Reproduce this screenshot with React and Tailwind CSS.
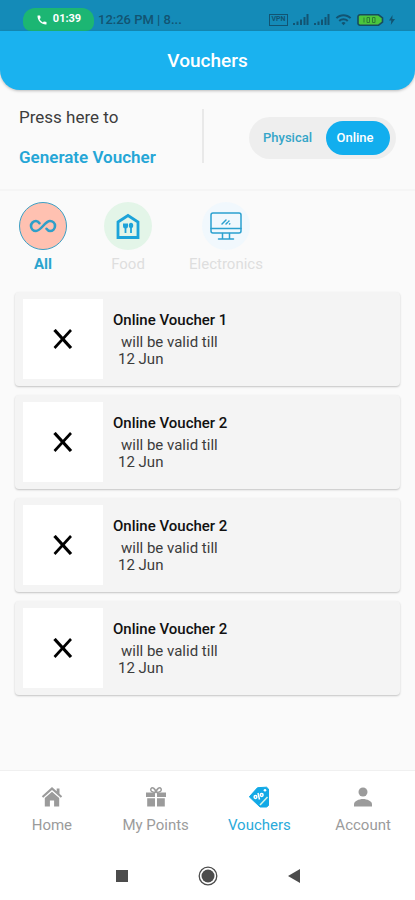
import { useState } from "react";
import clsx from "clsx";
import { MdCall, MdWifi } from "react-icons/md";

const vouchers = [
  { id: 1, title: "Online Voucher 1", date: "12 Jun" },
  { id: 2, title: "Online Voucher 2", date: "12 Jun" },
  { id: 3, title: "Online Voucher 2", date: "12 Jun" },
  { id: 4, title: "Online Voucher 2", date: "12 Jun" },
];

const categories = [
  { label: "All", icon: InfinityIcon, circle: "bg-[#ffc1b1]" },
  { label: "Food", icon: FoodIcon, circle: "bg-[#e3f5e8]" },
  { label: "Electronics", icon: MonitorIcon, circle: "bg-[#f1f8fd]" },
];

const tabs = [
  { label: "Home", icon: HomeIcon },
  { label: "My Points", icon: GiftIcon },
  { label: "Vouchers", icon: TagIcon },
  { label: "Account", icon: AccountIcon },
];

function InfinityIcon() {
  return (
    <svg width="28" height="14" viewBox="0 0 28 14" fill="none" stroke="#2f9fc9" strokeWidth="2.6" strokeLinecap="round">
      <path d="M10.500 4.200C9.500 2.800 8.500 2 7 2a5 5 0 0 0 0 10c5 0 9-10 14-10a5 5 0 0 1 0 10c-1.500 0-2.500-.8-3.500-2.200" />
    </svg>
  );
}

function FoodIcon() {
  return (
    <svg width="24" height="28" viewBox="0 0 24 28" fill="none" stroke="#1ca3d9">
      <path d="M2 10 12 3.500 22 10v15.500H2Z" strokeWidth="2.800" />
      <path d="M7 11.500v2.500a2.500 2.500 0 0 0 5 0v-2.500Z" fill="#1ca3d9" stroke="none" />
      <path d="M9.500 13v8" strokeWidth="1.800" />
      <ellipse cx="15" cy="13.500" rx="2.200" ry="2.700" fill="#1ca3d9" stroke="none" />
      <path d="M15 14v7" strokeWidth="1.800" />
    </svg>
  );
}

function MonitorIcon() {
  return (
    <svg width="32" height="28" viewBox="0 0 32 28" fill="none" stroke="#2ba0cf" strokeWidth="1.500" strokeLinecap="round">
      <rect x="1" y="1" width="30" height="20" rx="2" />
      <path d="M1 16.500h30M12.500 21.500v5M19.500 21.500v5M8.500 27h15M12 12l4-4M16 12l1.500-1.500M18.500 9.500l.5-.5M19.500 12l.3-.3" />
    </svg>
  );
}

function HomeIcon() {
  return (
    <svg width="22" height="22" viewBox="0 0 22 22" fill="currentColor">
      <path d="M11 1 .8 10.200 2.200 11.700 11 4l8.800 7.700 1.400-1.500-2.700-2.400V2.500h-2.800v2.800Z" />
      <path d="M11 5.800 3.800 12v8.500h5.100v-6h4.200v6h5.100V12Z" />
    </svg>
  );
}

function GiftIcon() {
  return (
    <svg width="22" height="22" viewBox="0 0 22 22" fill="currentColor">
      <path d="M1 6.500h9v4.500H1ZM12 6.500h9v4.500h-9ZM2.200 12.200H10v8.300H2.200ZM12 12.200h7.800v8.300H12Z" />
      <path d="M10.800 6.500C6.500 6.500 5 4.500 6 2.700c1.200-1.800 4.200-.7 5 3.800.8-4.500 3.800-5.600 5-3.800 1 1.800-.5 3.800-4.800 3.800" fill="none" stroke="currentColor" strokeWidth="1.500" />
    </svg>
  );
}

function TagIcon() {
  return (
    <svg width="22" height="22" viewBox="0 0 22 22" fill="none">
      <path d="M9.500 1.700 18.500 1.200 20.500 3v16.500L18.500 21H12L1.300 10.800Z" fill="#12a9e6" stroke="#12a9e6" strokeLinejoin="round" />
      <path d="M19.500 11 12 19" stroke="#d9f6e6" strokeWidth="1.500" />
      <circle cx="17" cy="4.200" r="1.300" fill="#fff" />
      <path d="M10 7 11.500 13.500" stroke="#fff" strokeWidth="1.500" />
      <circle cx="7.500" cy="11" r="1.400" stroke="#fff" strokeWidth="1.500" />
      <circle cx="13.700" cy="9" r="1.400" stroke="#fff" strokeWidth="1.500" />
    </svg>
  );
}

function AccountIcon() {
  return (
    <svg width="22" height="22" viewBox="0 0 22 22" fill="currentColor">
      <circle cx="11" cy="6" r="4.500" />
      <path d="M2 20.500v-2.300c0-3 5-5.200 9-5.200s9 2.200 9 5.200v2.300Z" />
    </svg>
  );
}

function SignalIcon() {
  return (
    <svg width="16" height="12" viewBox="0 0 16 12" fill="currentColor">
      <path d="M0 9h2v2H0ZM3.500 7.500h2V11h-2ZM7 5.500h2V11H7ZM10.500 3h2v8h-2ZM13.500 0h2v11h-2Z" />
    </svg>
  );
}

function BatteryIcon() {
  return (
    <svg width="27" height="12" viewBox="0 0 27 12">
      <path d="M3 .8h18.500L25.500 4v4l-4 3.200H3A2 2 0 0 1 1 9V3A2 2 0 0 1 3 .8Z" fill="#4bc63d" stroke="#174c5e" strokeWidth="1.600" />
      <path d="M7 3.500v5M10 3.500h2.500v5H10ZM15.500 3.500H18v5h-2.500Z" fill="none" stroke="#2b7d35" />
    </svg>
  );
}

function StatusBar() {
  return (
    <div className="flex h-[31px] items-end justify-between bg-[#148bb8] pr-5 pl-[23px] text-[#125472]">
      <div className="flex items-end gap-1">
        <div className="flex h-[23px] w-[71px] items-center justify-center gap-[5px] rounded-t-xl rounded-b-lg bg-[#1cb673] text-[11px] font-bold text-white">
          <MdCall size={12} />
          <span>01:39</span>
        </div>
        <span className="pb-[3px] text-[13px] leading-4 font-medium">12:26 PM | 8...</span>
      </div>
      <div className="flex h-[23px] items-center gap-[5px]">
        <span className="flex h-3 w-[19px] items-center justify-center border border-current text-[7px] leading-none font-bold">VPN</span>
        <SignalIcon />
        <SignalIcon />
        <MdWifi size={17} />
        <BatteryIcon />
        <svg width="6" height="10" viewBox="0 0 6 10" fill="currentColor">
          <path d="M3.500 0 0 5.500h2.300L1.800 10 6 4H3.300Z" />
        </svg>
      </div>
    </div>
  );
}

function VoucherCard({ title, date }) {
  return (
    <li className="flex gap-[10px] rounded-sm bg-[#f4f4f4] px-2 py-[7px] shadow-[0_1px_2px_rgba(0,0,0,0.22)]">
      <div className="flex h-20 w-20 shrink-0 items-center justify-center bg-white">
        <svg width="20" height="20" viewBox="0 0 20 20" fill="none" stroke="#000">
          <path d="M1.500 1 18 19" strokeWidth="3.200" />
          <path d="M18 1 1.500 19" strokeWidth="2.600" />
        </svg>
      </div>
      <div className="pt-[13px] text-[15px] leading-[17px] text-[#3c3c3c]">
        <h2 className="mb-[5px] font-medium text-[#111]">{title}</h2>
        <p className="pl-2">will be valid till</p>
        <p className="pl-[5px]">{date}</p>
      </div>
    </li>
  );
}

export default function App() {
  const [mode, setMode] = useState("Online");
  const [category, setCategory] = useState("All");
  const [tab, setTab] = useState("Vouchers");

  return (
    <div className="flex min-h-screen flex-col bg-[#fafafa] font-[Roboto,sans-serif]">
      <StatusBar />
      <header className="flex h-[59px] items-center justify-center rounded-b-[20px] bg-[#1ab2ef] shadow-[0_1px_3px_rgba(0,0,0,0.25)]">
        <h1 className="pt-[2px] text-[19px] font-medium text-white">Vouchers</h1>
      </header>

      <section className="flex h-[101px] items-center border-b-2 border-[#f5f5f5] px-[19px]">
        <div className="flex flex-1 flex-col items-start gap-5 pb-[5px] text-[17px] leading-5">
          <p className="text-[#3d3d3d]">Press here to</p>
          <button className="font-semibold text-[#25a6d6]">Generate Voucher</button>
        </div>
        <div className="mr-[45px] mb-2 h-[54px] w-[2px] bg-[#e9e9e9]" />
        <div className="pb-1">
          <div className="flex h-[42px] items-center rounded-full bg-[#eeeeee] px-[6px]">
            {["Physical", "Online"].map((name) => (
              <button
                key={name}
                onClick={() => setMode(name)}
                className={clsx(
                  "h-[34px] rounded-full pr-[6px] text-[13px] font-medium",
                  name === "Physical" ? "w-[71px]" : "w-16",
                  mode === name ? "bg-[#12aeee] text-white" : "text-[#35a5c8]"
                )}
              >
                {name}
              </button>
            ))}
          </div>
        </div>
      </section>

      <div className="flex gap-[37px] px-[19px] pt-[11px]">
        {categories.map(({ label, icon: Icon, circle }) => (
          <button key={label} onClick={() => setCategory(label)} className="flex flex-col items-center gap-1">
            <span
              className={clsx(
                "flex h-12 w-12 items-center justify-center rounded-full",
                circle,
                category === label && "border border-[#3b9fc4]"
              )}
            >
              <Icon />
            </span>
            <span
              className={clsx(
                "text-[15px] leading-5",
                category === label ? "font-bold text-[#2ba3cd]" : "text-[#dedede]"
              )}
            >
              {label}
            </span>
          </button>
        ))}
      </div>

      <ul className="flex flex-col gap-[9px] px-[15px] pt-[18px] pb-6">
        {vouchers.map((v) => (
          <VoucherCard key={v.id} title={v.title} date={v.date} />
        ))}
      </ul>

      <footer className="mt-auto border-t border-[#f0f0f0] bg-white">
        <nav className="grid grid-cols-4 pt-[15px]">
          {tabs.map(({ label, icon: Icon }) => (
            <button
              key={label}
              onClick={() => setTab(label)}
              className={clsx(
                "flex flex-col items-center gap-[7px] text-[15px] leading-5",
                tab === label ? "text-[#2aaada]" : "text-[#9b9b9b]"
              )}
            >
              <Icon />
              <span>{label}</span>
            </button>
          ))}
        </nav>
        <div className="flex h-[65px] items-center justify-center gap-[68px] pt-4 text-[#4c4c4c]">
          <button aria-label="Recent apps" className="flex w-[18px] justify-center">
            <span className="h-3 w-3 bg-current" />
          </button>
          <button aria-label="Home screen" className="flex w-[18px] justify-center">
            <svg width="20" height="20" viewBox="0 0 20 20" className="shrink-0">
              <circle cx="10" cy="10" r="8.800" fill="none" stroke="currentColor" strokeWidth="1.300" />
              <circle cx="10" cy="10" r="6.500" fill="currentColor" />
            </svg>
          </button>
          <button aria-label="Back" className="flex w-[18px] justify-center">
            <svg width="12" height="14" viewBox="0 0 12 14" fill="currentColor">
              <path d="M12 0v14L0 7Z" />
            </svg>
          </button>
        </div>
      </footer>
    </div>
  );
}
